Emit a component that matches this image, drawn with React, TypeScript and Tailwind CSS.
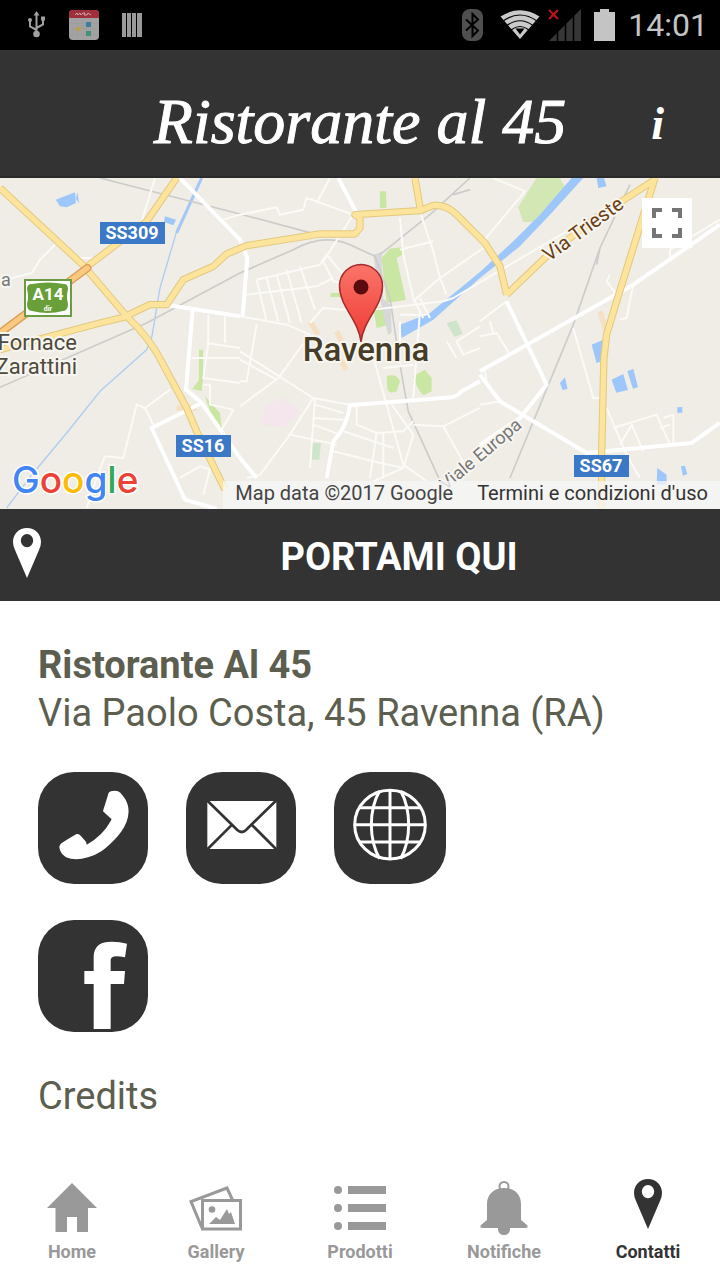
import React, { useState } from 'react';

type TabId = 'home' | 'gallery' | 'prodotti' | 'notifiche' | 'contatti';

const StatusBar = () => (
  <div className="flex h-[50px] items-center bg-black pl-6 pr-3 text-[#c4c4c4]">
    <div className="flex flex-1 items-center gap-5">
      <svg width="25" height="28" viewBox="0 0 25 28" fill="none" stroke="#a0a0a0" strokeWidth="2">
        <path d="M12.500 24V4M12.500 19L6 15.500V10M12.500 17L19 13.500V8" />
        <path d="M12.500 0l3 4.500h-6zM17 5.500h4v4h-4z" fill="#a0a0a0" stroke="none" />
        <circle cx="6" cy="9" r="2" fill="#a0a0a0" stroke="none" />
        <circle cx="12.500" cy="23" r="3.300" fill="#a0a0a0" stroke="none" />
      </svg>
      <svg width="30" height="30" viewBox="0 0 30 30">
        <rect width="30" height="30" rx="4" fill="#a2a2a2" />
        <path d="M0 8V4a4 4 0 0 1 4-4h22a4 4 0 0 1 4 4v4z" fill="#9e2f3b" />
        <path d="M6 5l2-2 1 2 2-2 1 2 2-2h2l-1 2h3l1-2 3 2" stroke="#c9a5a8" fill="none" />
        <path d="M0 13.500h30M0 18.500h30M0 24h30M8 8v22M15 8v22M22 8v22" stroke="#999" strokeWidth=".5" />
        <rect x="17" y="12" width="5" height="5" fill="#3d7d9c" />
        <rect x="17" y="21" width="5" height="5" fill="#439278" />
        <rect x="7" y="17" width="5" height="4" fill="#b4a252" />
      </svg>
      <svg width="24" height="26" viewBox="0 0 24 26" fill="#999" className="ml-px">
        <path d="M2 1h4v24H2zM7 1h4v24H7zM12 1h4v24h-4zM17 1h5v24h-5z" />
      </svg>
    </div>
    <div className="flex items-center">
      <svg width="22" height="32" viewBox="0 0 22 32" className="mr-4">
        <rect x="0" y="0" width="21" height="32" rx="8" fill="#4f4f4f" />
        <path d="M4 10.500l12 11L10.500 27V5L16 10.500l-12 11" fill="none" stroke="#000" strokeWidth="2" />
      </svg>
      <svg width="40" height="30" viewBox="0 0 40 30" className="mr-2">
        <path d="M20 29L.5 6.500Q20-6 39.500 6.500z" fill="#cacaca" />
        <path d="M3 11Q20-1 37 11M7 15.500Q20 6 33 15.500M11 20Q20 13 29 20" stroke="#000" strokeWidth="1.200" fill="none" />
        <path d="M15.500 18.500h9L20 24.500z" fill="#000" />
      </svg>
      <svg width="34" height="34" viewBox="0 0 34 34" className="mr-3">
        <path d="M1 33L33 1v32z" fill="#363636" />
        <path d="M9.500 23v11M17.500 15v19M25.500 7v27" stroke="#000" strokeWidth="1.500" />
        <path d="M1 2l9 9M10 2l-9 9" stroke="#c1121b" strokeWidth="2" />
      </svg>
      <svg width="22" height="32" viewBox="0 0 22 32" className="mr-3" fill="#c4c4c4">
        <path d="M6 0h9v3h6v29H0V3h6z" />
      </svg>
      <span className="text-[32px] leading-none">14:01</span>
    </div>
  </div>
);

const Header = () => (
  <header className="grid h-32 grid-cols-[1fr_auto_1fr] items-center border-b-2 border-[#2b2b2b] bg-[#333] pt-[18px] text-white">
    <span />
    <h1 className="font-['Liberation_Serif',serif] text-[64px] italic leading-none [-webkit-text-stroke:1px_white]">
      Ristorante al 45
    </h1>
    <button
      type="button"
      aria-label="Info"
      className="mr-12 justify-self-end px-2 pt-1 font-['Liberation_Serif',serif] text-[46px] font-bold italic leading-none"
    >
      i
    </button>
  </header>
);

// Road geometry is drawn on a 3x grid and scaled down
const MAJOR_ROADS = [
  'M0 30L250 262L380 415Q450 480 490 560L560 690L590 760L675 935',
  'M530 0L440 130L262 265',
  'M0 515L150 475L300 435L370 418L450 380H500L550 305L640 265L680 228L740 203L960 168H1065L1080 150V120L1065 110L1260 98',
  'M1245 0L1262 98L1300 82Q1340 80 1370 110L1440 180L1455 195L1500 265L1520 350',
  'M1520 350L1640 235L1780 125L1880 60L1965 5',
  'M1965 0L1920 145L1850 370L1820 470L1812 540L1805 830V993',
];

const WHITE_ROADS = [
  'M505 382L720 415',
  'M578 395L558 635L605 675L720 840L770 900',
  'M605 675L455 750L555 965L650 993',
  'M540 0L720 185L742 240L728 415',
  'M1015 0L1070 105',
  'M1520 370L1640 620L1560 720L1440 800',
  'M2160 140L1900 320L1440 580',
  'M1440 610L1385 640Q1370 660 1330 660L1050 682Q1040 750 1000 790L980 900',
  'M1440 590L1500 670L1760 825L2075 795L2160 735',
];

const STREETS = [
  'M165 200L120 245L95 285L0 310M230 240H300L350 195M465 0L425 130M720 110L670 125',
  'M720 415L860 440L930 470L835 600L720 685M720 520L940 660M720 545L830 605',
  'M1480 0L1575 40L1450 190',
  'M510 635L435 690L410 680L370 840L315 835L290 900L260 990M435 690L465 750M540 900L600 865L630 875L610 950',
  'M575 540H720M620 495L720 510M625 410V495L610 600L720 615M675 415V495M610 620H630V680L700 695L665 755',
  'M720 110L830 88L840 110L910 95L920 60L1060 110M990 0L950 75M1060 110L970 250',
  'M740 350L950 325L1000 300M770 305L800 430M800 300L835 430M830 290L870 435M860 275L905 435M900 265L945 395M770 305L960 260L980 230L1030 290',
  'M930 435L970 390L1080 400L1330 370L1360 360L1700 160M770 440L740 610L720 610M970 250L1000 310L1100 330',
  'M940 660L870 770L780 890L740 900M940 660L1050 680M945 665L930 870M945 680L1030 705M940 720L1030 725M940 740L1020 770M870 770L1010 800M1070 680V740L1130 765L1210 760L1240 730',
  'M1000 820L1120 850L1210 870M1030 760L1180 810M1130 765L1110 900M1150 765V900M1115 520L1210 860L1280 910M1175 680L1240 770L1210 870L1120 910M1150 570L1240 560',
  'M1200 120L1210 230L1240 360L1270 420M1260 100L1300 220L1320 300L1450 210M1320 300L1240 370M1320 300L1340 350M1200 215L1300 190M1260 360L1290 420M1200 410L1280 410',
  'M1260 400L1240 660M1200 430V560M1240 740L1330 745L1400 870M1330 745L1440 690M1440 445L1370 490L1390 530L1440 510M1340 490L1370 540',
  'M1440 430L1520 370M1440 475L1490 465L1530 530M1470 430L1480 465M1455 580L1460 610M1440 680L1500 670M1720 450L1780 660H1800M1820 690L1880 830L1920 900M1840 750L1970 710L2010 800M1860 800L1895 740L1930 820M1990 720L2020 710V800M1980 750L2010 740M1830 290L1820 310L1850 350M1900 320L1880 420L1860 425M2160 125L2010 215V240',
];

const Label = ({ x, y, children }: { x: number; y: number; children: string }) => (
  <g>
    <rect x={x} y={y} width={children.length === 5 ? 65 : 55} height="22" fill="#3b78c6" />
    <text
      x={x + (children.length === 5 ? 32 : 27)}
      y={y + 17}
      textAnchor="middle"
      fontSize="18"
      fontWeight="700"
      fill="#fff"
    >
      {children}
    </text>
  </g>
);

const CityMap = () => (
  <svg
    className="block h-full w-full font-[Roboto,sans-serif]"
    viewBox="0 0 720 331"
    preserveAspectRatio="xMidYMid slice"
    role="img"
    aria-label="Mappa di Ravenna"
  >
    <rect width="720" height="331" fill="#efede5" />
    <g transform="scale(.3333)" fill="none" strokeLinejoin="round">
      {/* parks */}
      <g fill="#c9e6a2">
        <path d="M1140 40h18l2 50h-20zM1145 240L1170 212L1205 208L1208 230L1190 240L1218 365L1160 375zM1120 390L1160 385L1165 440L1130 450zM1160 595q30-10 40 15l-10 30q-25 10-28-10zM1240 595l35-20 20 25v40l-25 12q-20-20-30-57zM597 515h12v85l-4 40-28-8 20-25zM615 655l45 50 5 45-25-20zM992 345h40v12h-40z" />
      </g>
      <path d="M1610 0h70l20 35-100 97h-30l-15-45z" fill="#d2e7b4" />
      <path d="M1340 435l30-8 18 40-25 10zM935 795h28l-5 50h-22z" fill="#cfe5cb" />
      <path d="M845 658l55 45-50 45-70-10 20-50z" fill="#f5e5ed" />
      <path d="M1120 230l25-8 5 140 22 20 3 80-10 10-25-110z" fill="#d8d8da" />
      <path d="M930 430l25 40M1010 460l15 30M1020 545l20 30M1800 400l20 60M530 690h60" stroke="#f5e0c4" strokeWidth="16" />
      {/* water */}
      <path
        d="M167 65L225 43L228 75L200 88L180 85zM232 42l6 35-10-15zM495 115l33 10-8 17-28-10zM1200 440L1290 405L1440 282L1540 190L1620 110L1715 0H1750L1650 110L1560 205L1440 300L1300 425L1205 480zM1790 0h22l8 25-25 5zM1775 500l35-15-5 65-15 5zM1835 605l35-17 14 48-35 8zM1882 580l18-8 14 55-15 5zM1680 615l15-17 8 35-15 3zM2032 688l15-1v17h-15zM1972 870l28 20v30h-30zM2043 865l12-2 7 25-13 5z"
        fill="#9dc7fa"
      />
      <path d="M605 0L530 160L480 330L455 480L440 515L300 640L200 765L100 885L20 990" stroke="#adcdf3" strokeWidth="4" />
      <path d="M605 0L530 165" stroke="#a1c8f8" strokeWidth="9" />
      {/* railways */}
      <g stroke="#cccccb" strokeWidth="5">
        <path d="M0 628L440 435L720 285L880 215Q970 165 1050 200L1125 235L1170 360L1200 560L1225 700L1330 930" />
        <path d="M300 0L720 108L960 172M1140 230L1290 110L1410 0M1360 50l50-15M1890 20L1800 210L1720 440L1530 900M1800 210l-10 50" />
      </g>
      {/* streets */}
      {STREETS.map((d) => (
        <path key={d} d={d} stroke="#fbfaf7" strokeWidth="6" />
      ))}
      {WHITE_ROADS.map((d) => (
        <path key={d} d={d} stroke="#fff" strokeWidth="12" />
      ))}
      {MAJOR_ROADS.map((d) => (
        <path key={d} d={d} stroke="#e3c97f" strokeWidth="22" />
      ))}
      {MAJOR_ROADS.map((d) => (
        <path key={d} d={d} stroke="#fde49c" strokeWidth="16" />
      ))}
      <path d="M0 465L262 270" stroke="#dc9c55" strokeWidth="24" strokeLinecap="round" />
      <path d="M0 465L262 270" stroke="#fcc980" strokeWidth="16" strokeLinecap="round" />
    </g>

    <Label x={100} y={44}>SS309</Label>
    <Label x={176} y={257}>SS16</Label>
    <Label x={574} y={277}>SS67</Label>

    <rect x="24" y="101" width="48" height="38" fill="#6b9b45" />
    <rect x="26" y="103" width="44" height="34" fill="#fff" />
    <path d="M32 106q16-3 32 0 4 0 4 5-2 8 0 15 0 7-5 7-15 4-31 0-5 0-5-7 2-7 0-15 0-5 5-5z" fill="#689f38" />
    <g fill="#fff" fontWeight="700" textAnchor="middle">
      <text x="48" y="122" fontSize="17">A14</text>
      <text x="48" y="133" fontSize="7">dir</text>
    </g>

    <g stroke="#f7f5ef" strokeWidth="4" strokeLinejoin="round" style={{ paintOrder: 'stroke' }}>
      <g fill="#4f4a3e" fontSize="22" textAnchor="end">
        <text x="77" y="172">Fornace</text>
        <text x="77" y="196">Zarattini</text>
      </g>
      <text x="1" y="108" fontSize="18" fill="#777">a</text>
      <text x="366" y="183" fontSize="33" fontWeight="500" fill="#463c27" textAnchor="middle">Ravenna</text>
      <text transform="translate(549 84) rotate(-36)" fontSize="20" fill="#6b3f14">Via Trieste</text>
      <text transform="translate(446 313) rotate(-40)" fontSize="18" fill="#777">Viale Europa</text>
    </g>

    {/* marker */}
    <defs>
      <linearGradient id="marker" x1="0" y1="0" x2="0" y2="1">
        <stop offset="0" stopColor="#fb7469" />
        <stop offset="1" stopColor="#ee3b34" />
      </linearGradient>
    </defs>
    <path
      d="M361 164C359 143 339.500 128 339.500 108a21.500 21.500 0 0 1 43 0C382.500 128 363 143 361 164z"
      fill="url(#marker)"
      stroke="#a52b2b"
      strokeWidth="1.500"
    />
    <circle cx="361" cy="109" r="7.500" fill="#5a0b0d" />

    <g fontFamily="Inter, sans-serif" fontSize="37" fontWeight="500" stroke="#fff" strokeWidth="3" style={{ paintOrder: 'stroke' }}>
      <text x="12" y="315">
        <tspan fill="#4285f4">G</tspan>
        <tspan fill="#ea4335">o</tspan>
        <tspan fill="#fbbc05">o</tspan>
        <tspan fill="#4285f4">g</tspan>
        <tspan fill="#34a853">l</tspan>
        <tspan fill="#ea4335">e</tspan>
      </text>
    </g>
  </svg>
);

const MapPanel = () => (
  <section className="relative h-[331px] overflow-hidden">
    <CityMap />
    <button
      type="button"
      aria-label="Schermo intero"
      className="absolute right-7 top-5 flex h-[50px] w-[50px] items-center justify-center bg-white"
    >
      <svg width="32" height="32" viewBox="0 0 32 32" fill="none" stroke="#757575" strokeWidth="4">
        <path d="M3 11V3h8M21 3h8v8M29 21v8h-8M11 29H3v-8" />
      </svg>
    </button>
    <div className="absolute bottom-0 right-0 flex h-7 items-center gap-6 bg-[#f5f5f5]/80 px-3 pb-1 text-[20px] text-[#444]">
      <span>Map data ©2017 Google</span>
      <a href="#termini" className="text-[#333]">Termini e condizioni d'uso</a>
    </div>
  </section>
);

const PinIcon = () => (
  <svg width="28" height="50" viewBox="0 0 28 50" fill="currentColor">
    <path
      fillRule="evenodd"
      d="M14 0c8 0 14 6 14 14q0 4-2 8L14 50 2 22Q0 18 0 14C0 6 6 0 14 0zm0 6a6.200 6.600 0 1 0 0 13.200A6.200 6.600 0 1 0 14 6z"
    />
  </svg>
);

const PhoneIcon = () => (
  <svg width="110" height="112" viewBox="0 0 330 336" fill="#fff">
    <path d="M212 62Q216 56 230 56Q242 56 247 62Q256 72 263 83Q276 108 270 134C262 176 222 214 190 238Q172 250 150 256Q112 268 84 256Q66 244 64 226Q63 220 70 214Q92 200 114 187Q122 183 128 191L142 207Q146 212 146 218Q194 192 220 144Q222 139 216 137L195 118Q196 112 199 104Z" />
  </svg>
);

const MailIcon = () => (
  <svg width="110" height="112" viewBox="0 0 330 336">
    <rect x="64" y="87" width="207" height="144" fill="#fff" />
    <path d="M62 84L154 174Q167 186 180 174L272 84M62 234L136 160M273 234L199 160" fill="none" stroke="#333" strokeWidth="8" />
  </svg>
);

const GlobeIcon = () => (
  <svg width="112" height="112" viewBox="0 0 336 336" fill="none" stroke="#fff" strokeWidth="9">
    <ellipse cx="168" cy="158" rx="106" ry="103" />
    <path d="M168 55V261M62 158H274M78 107H258M78 210H258M137 56Q112 100 112 158T137 260M200 56Q224 100 224 158T200 260" />
  </svg>
);

const FacebookIcon = () => (
  <svg width="110" height="112" viewBox="0 0 330 336" fill="#fff">
    <path d="M167 327V192H139V153H167V107Q170 70 208 66Q240 64 267 71L261 112Q218 102 218 120V153H261L258 192H218V327z" />
  </svg>
);

const CONTACTS = [
  { label: 'Telefono', href: '#telefono', icon: <PhoneIcon /> },
  { label: 'Email', href: '#email', icon: <MailIcon /> },
  { label: 'Sito web', href: '#sito', icon: <GlobeIcon /> },
  { label: 'Facebook', href: '#facebook', icon: <FacebookIcon /> },
];

const TABS: { id: TabId; label: string; icon: React.ReactNode }[] = [
  {
    id: 'home',
    label: 'Home',
    icon: (
      <svg width="50" height="50" viewBox="0 0 50 50" fill="currentColor">
        <path d="M25 0l25 25h-9v24H30V34H20v15H8.500V25H0z" />
      </svg>
    ),
  },
  {
    id: 'gallery',
    label: 'Gallery',
    icon: (
      <svg width="54" height="46" viewBox="0 0 54 46" fill="none" stroke="currentColor" strokeWidth="3">
        <path d="M13 43L2 16.500L38 3l6 13" />
        <rect x="13.500" y="15.500" width="38" height="28.500" />
        <circle cx="23" cy="24.500" r="3.300" fill="currentColor" stroke="none" />
        <path d="M20 39l7-7 4 3 7-11 2 5 2-2 4 12z" fill="currentColor" stroke="none" />
      </svg>
    ),
  },
  {
    id: 'prodotti',
    label: 'Prodotti',
    icon: (
      <svg width="52" height="46" viewBox="0 0 52 46" fill="currentColor">
        <circle cx="4" cy="5" r="4" />
        <circle cx="4" cy="23" r="4" />
        <circle cx="4" cy="41" r="4" />
        <path d="M14 1h38v8H14zM14 19h38v8H14zM14 37h38v8H14z" />
      </svg>
    ),
  },
  {
    id: 'notifiche',
    label: 'Notifiche',
    icon: (
      <svg width="48" height="54" viewBox="0 0 48 54" fill="currentColor">
        <circle cx="24" cy="5.500" r="4.500" fill="none" stroke="currentColor" strokeWidth="2" />
        <path d="M24 7c11 0 17 7 17 16v16l6 5q2 3-2 3H30v2q-1 5-6 5t-6-5v-2H3q-4 0-2-3l6-5V23C7 14 13 7 24 7z" />
      </svg>
    ),
  },
  {
    id: 'contatti',
    label: 'Contatti',
    icon: (
      <span className="pb-2">
        <PinIcon />
      </span>
    ),
  },
];

export default function App() {
  const [tab, setTab] = useState<TabId>('contatti');

  return (
    <div className="flex min-h-screen flex-col bg-white font-[Roboto,sans-serif]">
      <StatusBar />
      <Header />
      <MapPanel />

      <button type="button" className="flex h-[92px] items-center bg-[#333] pl-[13px] text-white">
        <span className="w-[65px] pb-1">
          <PinIcon />
        </span>
        <span className="flex-1 pt-1 text-center text-[38px] font-bold">PORTAMI QUI</span>
      </button>

      <main className="flex-1 px-[38px] pt-10 text-[38px] leading-[48px] text-[#5c5e50]">
        <h2 className="font-bold">Ristorante Al 45</h2>
        <p>Via Paolo Costa, 45 Ravenna (RA)</p>
        <div className="mt-[35px] grid w-fit grid-cols-[repeat(3,auto)] gap-x-[38px] gap-y-9">
          {CONTACTS.map((c) => (
            <a
              key={c.label}
              href={c.href}
              aria-label={c.label}
              className="flex h-28 items-center justify-center overflow-hidden rounded-[36px] bg-[#333]"
            >
              {c.icon}
            </a>
          ))}
        </div>
        <a href="#credits" className="mt-10 inline-block">Credits</a>
      </main>

      <nav className="grid grid-cols-5 pb-4">
        {TABS.map((t) => (
          <button
            key={t.id}
            type="button"
            onClick={() => setTab(t.id)}
            className={`flex flex-col items-center text-[18px] font-bold leading-6 ${
              tab === t.id ? 'text-[#333]' : 'text-[#999]'
            }`}
          >
            <span className="flex h-[60px] items-center pb-1">{t.icon}</span>
            {t.label}
          </button>
        ))}
      </nav>
    </div>
  );
}
